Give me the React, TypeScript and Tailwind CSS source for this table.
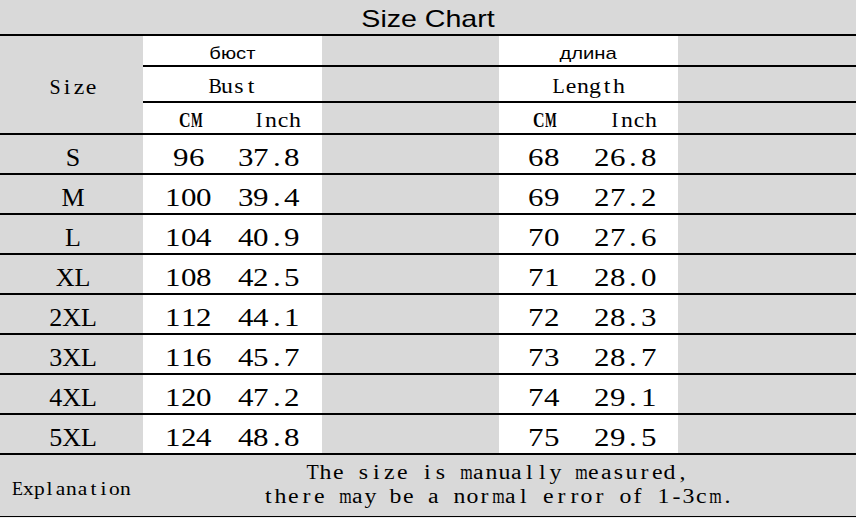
import React from "react";

function Mono({ text, cell, digitScale }: { text: string; cell: string; digitScale?: boolean }) {
  return (
    <span className="inline-flex whitespace-pre">
      {Array.from(text).map((ch, i) => {
        let sc = "";
        if (digitScale) {
          if (/[0-9.a-lnoprstuvxyz,\-]/.test(ch)) sc = "scale-x-[1.19]";
          else if (/[mw]/.test(ch)) sc = "scale-x-[0.8]";
        }
        return (
          <span key={i} className={`${cell} inline-block text-center ${sc}`}>
            {ch === " " ? "\u00a0" : ch}
          </span>
        );
      })}
    </span>
  );
}

const rows = [
  ["S", "96", "37.8", "68", "26.8"],
  ["M", "100", "39.4", "69", "27.2"],
  ["L", "104", "40.9", "70", "27.6"],
  ["XL", "108", "42.5", "71", "28.0"],
  ["2XL", "112", "44.1", "72", "28.3"],
  ["3XL", "116", "45.7", "73", "28.7"],
  ["4XL", "120", "47.2", "74", "29.1"],
  ["5XL", "124", "48.8", "75", "29.5"],
];

function CM() {
  return (
    <span className="inline-flex font-bold">
      <span className="inline-block w-[11px] text-center scale-x-[0.8]">C</span>
      <span className="inline-block w-[11px] text-center scale-x-[0.62]">M</span>
    </span>
  );
}

export default function App() {
  return (
    <div className="w-[856px] h-[518px] bg-[#d9d9d9] text-black overflow-hidden font-['Liberation_Serif',serif]">
      {/* Title */}
      <div className="h-[34px] flex justify-center pt-[7px] font-['Liberation_Sans',Arial,sans-serif] text-[24px] leading-none">
        <span className="inline-block scale-x-[1.19]">Size Chart</span>
      </div>
      <div className="h-[2px] bg-black" />

      {/* Header block */}
      <div className="flex h-[97px]">
        <div className="w-[143px] pl-[3px] flex justify-center pt-[41px] text-[20px] leading-none">
          <Mono text="Size" cell="w-[12px]" digitScale />
        </div>
        <div className="flex-1 flex flex-col">
          <div className="h-[29px] flex font-['Liberation_Sans',Arial,sans-serif] text-[17px] leading-none">
            <div className="w-[179px] bg-white flex justify-center pt-[9px]">
              <span className="inline-block scale-x-[1.19]">бюст</span>
            </div>
            <div className="w-[177px]" />
            <div className="w-[179px] bg-white flex justify-center pt-[9px]">
              <span className="inline-block scale-x-[1.19]">длина</span>
            </div>
            <div className="flex-1" />
          </div>
          <div className="h-[2px] bg-black" />
          <div className="h-[34px] flex text-[20px] leading-none">
            <div className="w-[179px] bg-white flex justify-center pt-[9px]">
              <Mono text="Bust" cell="w-[12px]" digitScale />
            </div>
            <div className="w-[177px]" />
            <div className="w-[179px] bg-white flex justify-center pt-[9px]">
              <Mono text="Length" cell="w-[12px]" digitScale />
            </div>
            <div className="flex-1" />
          </div>
          <div className="h-[2px] bg-black" />
          <div className="h-[30px] flex text-[20px] leading-none">
            <div className="w-[179px] bg-white flex pt-[7px]">
              <div className="w-[91px] flex justify-center">
                <CM />
              </div>
              <div className="w-[86px] flex justify-center">
                <Mono text="Inch" cell="w-[12px]" digitScale />
              </div>
            </div>
            <div className="w-[177px]" />
            <div className="w-[179px] bg-white flex pt-[7px]">
              <div className="w-[89px] flex justify-center">
                <CM />
              </div>
              <div className="w-[91px] flex justify-center">
                <Mono text="Inch" cell="w-[12px]" digitScale />
              </div>
            </div>
            <div className="flex-1" />
          </div>
        </div>
      </div>
      <div className="h-[2px] bg-black" />

      {/* Data rows */}
      {rows.map((r) => (
        <React.Fragment key={r[0]}>
          <div className="h-[38px] flex text-[26px] leading-none">
            <div className="w-[143px] pl-[3px] flex justify-center pt-[10px]">{r[0]}</div>
            <div className="w-[179px] bg-white flex pt-[10px]">
              <div className="w-[91px] flex justify-center">
                <Mono text={r[1]} cell="w-[15.5px]" digitScale />
              </div>
              <div className="w-[69px] flex justify-center">
                <Mono text={r[2]} cell="w-[15.5px]" digitScale />
              </div>
            </div>
            <div className="w-[177px]" />
            <div className="w-[179px] bg-white flex pt-[10px]">
              <div className="w-[89px] flex justify-center">
                <Mono text={r[3]} cell="w-[15.5px]" digitScale />
              </div>
              <div className="w-[74px] flex justify-center">
                <Mono text={r[4]} cell="w-[15.5px]" digitScale />
              </div>
            </div>
            <div className="flex-1" />
          </div>
          <div className="h-[2px] bg-black" />
        </React.Fragment>
      ))}

      {/* Explanation */}
      <div className="h-[61px] flex">
        <div className="w-[143px] pl-[12px] pt-[25px] text-[18px] leading-none">
          <Mono text="Explanation" cell="w-[10.8px]" digitScale />
        </div>
        <div className="flex-1 pr-[4px] pt-[4.5px] text-[20px] leading-[24px] flex flex-col items-center">
          <div>
            <Mono text="The size is manually measured," cell="w-[12.75px]" digitScale />
          </div>
          <div>
            <Mono text="there may be a normal error of 1-3cm." cell="w-[12.75px]" digitScale />
          </div>
        </div>
      </div>
      <div className="h-[1px] bg-black" />
      <div className="h-[1px] bg-[#eeeeee]" />
    </div>
  );
}
